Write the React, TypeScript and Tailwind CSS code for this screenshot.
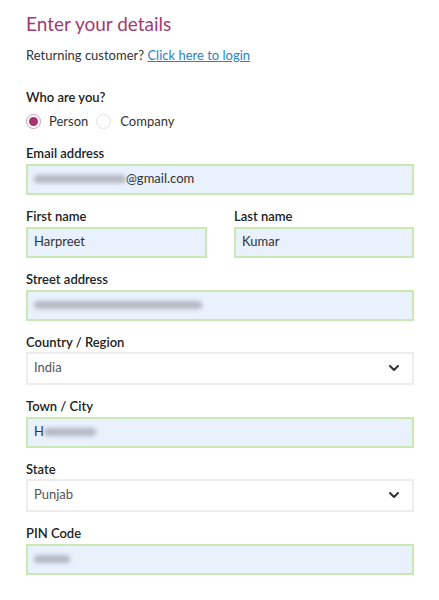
import { ChevronDown } from 'lucide-react'

const font = { fontFamily: 'Lato, "Noto Sans", sans-serif' }

function Label({ children }: { children: React.ReactNode }) {
  return <div className="h-4 text-[13px] font-semibold leading-4 text-[#222]">{children}</div>
}

function Filled({ children }: { children: React.ReactNode }) {
  return (
    <div className="mt-[3px] flex h-[31px] items-center border-2 border-[#c9e8b4] bg-[#e9f1fd] px-[6px] text-[13px] text-[#333]">
      {children}
    </div>
  )
}

function Blur({ w }: { w: number }) {
  return (
    <span
      className="inline-block h-[8px] rounded-full bg-[#b3b8c1] blur-[2px]"
      style={{ width: w }}
    />
  )
}

function Select({ value }: { value: string }) {
  return (
    <div className="mt-[2px] flex h-[33px] items-center justify-between border-2 border-[#ededed] bg-white pl-[6px] pr-[10px] text-[13px] text-[#555]">
      <span>{value}</span>
      <ChevronDown className="h-4 w-4 text-[#333]" strokeWidth={3} />
    </div>
  )
}

export default function App() {
  return (
    <div className="min-h-[600px] bg-white pl-[26px] pr-[25px] pt-[10px]" style={font}>
      <h1 className="text-[19px] leading-7 text-[#a23a72]">Enter your details</h1>
      <p className="mt-[8px] text-[13px] leading-[18px] text-[#333]">
        Returning customer?{' '}
        <a href="#" className="text-[#2b7fc4] underline">
          Click here to login
        </a>
      </p>

      <div className="mt-[25px]">
        <Label>Who are you?</Label>
        <div className="mt-[7px] flex items-center text-[13px] text-[#333]">
          <span className="flex h-[15px] w-[15px] items-center justify-center rounded-full border border-[#c8a0b6] bg-white">
            <span className="h-[9px] w-[9px] rounded-full bg-[#a8336f]" />
          </span>
          <span className="ml-[8px]">Person</span>
          <span className="ml-[8px] h-[15px] w-[15px] rounded-full border border-[#e2e2e2]" />
          <span className="ml-[9px]">Company</span>
        </div>
      </div>

      <div className="mt-[13px] flex flex-col gap-[13px]">
        <div>
          <Label>Email address</Label>
          <Filled>
            <Blur w={92} />
            <span>@gmail.com</span>
          </Filled>
        </div>

        <div className="flex gap-[27px]">
          <div className="w-[181px]">
            <Label>First name</Label>
            <Filled>Harpreet</Filled>
          </div>
          <div className="flex-1">
            <Label>Last name</Label>
            <Filled>Kumar</Filled>
          </div>
        </div>

        <div>
          <Label>Street address</Label>
          <Filled>
            <Blur w={168} />
          </Filled>
        </div>

        <div>
          <Label>Country / Region</Label>
          <Select value="India" />
        </div>

        <div>
          <Label>Town / City</Label>
          <Filled>
            <span>H</span>
            <Blur w={52} />
          </Filled>
        </div>

        <div>
          <Label>State</Label>
          <Select value="Punjab" />
        </div>

        <div>
          <Label>PIN Code</Label>
          <Filled>
            <Blur w={36} />
          </Filled>
        </div>
      </div>
    </div>
  )
}
